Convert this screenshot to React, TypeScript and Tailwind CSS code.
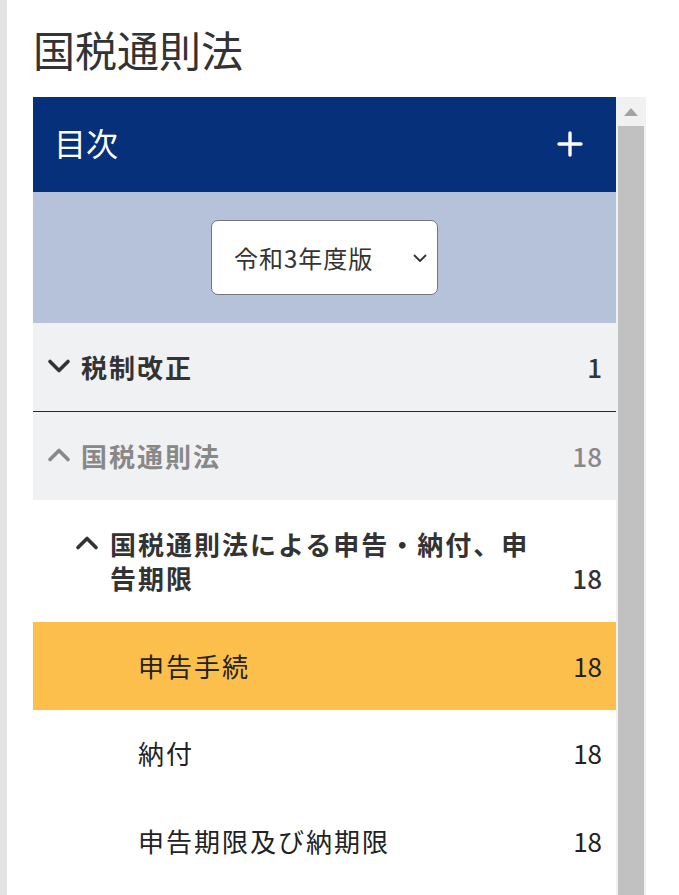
import React from "react";

const font = { fontFamily: '"Noto Sans CJK JP", "Noto Sans", sans-serif' };

function ChevronDown({ className }: { className?: string }) {
  return (
    <svg viewBox="0 0 24 24" className={className} fill="none" stroke="currentColor" strokeWidth={3.6} strokeLinecap="round" strokeLinejoin="round">
      <path d="M3 7.5l9 9 9-9" />
    </svg>
  );
}
function ChevronUp({ className }: { className?: string }) {
  return (
    <svg viewBox="0 0 24 24" className={className} fill="none" stroke="currentColor" strokeWidth={3.6} strokeLinecap="round" strokeLinejoin="round">
      <path d="M3 16.5l9-9 9 9" />
    </svg>
  );
}

export default function App() {
  return (
    <div className="flex h-[895px] overflow-hidden bg-white text-[#333]" style={font}>
      <div className="w-[7px] shrink-0 bg-[#e4e4e4]" />
      <div className="flex flex-col pl-[26px]">
        <h1 className="pt-[21px] pb-[20px] text-[42px] leading-[56px] font-normal text-[#333]">国税通則法</h1>
        <div className="flex w-[613px] flex-1">
          <div className="w-[583px] shrink-0 flex flex-col">
            <div className="flex h-[95px] items-center justify-between bg-[#063079] pb-[6px] pl-[21px] pr-[33px] text-white">
              <span className="text-[32px] leading-none">目次</span>
              <svg viewBox="0 0 26 26" className="mt-[4px] h-[26px] w-[26px]" stroke="white" strokeWidth={3.4} strokeLinecap="round">
                <path d="M13 2v22M2 13h22" />
              </svg>
            </div>
            <div className="flex h-[131px] items-center justify-center bg-[#b5c2da]">
              <div className="flex h-[75px] w-[227px] items-center justify-between rounded-[7px] border border-[#767676] bg-white pl-[22px] pr-[9px]">
                <span className="text-[24px] tracking-[1px] text-[#333]">令和3年度版</span>
                <svg viewBox="0 0 16 16" className="h-[16px] w-[16px]" fill="none" stroke="#333" strokeWidth={1.8} strokeLinecap="round" strokeLinejoin="round">
                  <path d="M2.5 5.5l5.5 5.5 5.5-5.5" />
                </svg>
              </div>
            </div>
            <div className="flex h-[89px] items-center justify-between border-b border-[#0a2d66] bg-[#f0f1f3] pb-[2px] pl-[14px] pr-[14px] text-[26px] font-semibold tracking-[2px] text-[#333]">
              <div className="flex items-center">
                <ChevronDown className="h-[24px] w-[24px] text-[#333]" />
                <span className="ml-[10px]">税制改正</span>
              </div>
              <span className="font-medium tracking-normal">1</span>
            </div>
            <div className="flex h-[88px] items-center justify-between bg-[#f0f1f3] pb-[2px] pl-[14px] pr-[14px] text-[26px] font-semibold tracking-[2px] text-[#888]">
              <div className="flex items-center">
                <ChevronUp className="h-[24px] w-[24px] text-[#888]" />
                <span className="ml-[10px]">国税通則法</span>
              </div>
              <span className="font-medium tracking-normal">18</span>
            </div>
            <div className="flex items-end justify-between py-[27px] pl-[42px] pr-[14px] text-[26px] font-semibold leading-[34px] tracking-[2px] text-[#333]">
              <div className="flex items-start">
                <ChevronUp className="mt-[4px] h-[24px] w-[24px] shrink-0 text-[#333]" />
                <span className="ml-[11px] w-[430px]">国税通則法による申告・納付、申告期限</span>
              </div>
              <span className="font-medium tracking-normal">18</span>
            </div>
            <div className="flex h-[88px] items-center justify-between bg-[#fdbf4b] pb-[2px] pl-[105px] pr-[14px] text-[26px] tracking-[2px] text-[#222]">
              <span>申告手続</span>
              <span className="tracking-normal">18</span>
            </div>
            <div className="flex h-[87px] items-center justify-between pb-[2px] pl-[105px] pr-[14px] text-[26px] tracking-[2px] text-[#222]">
              <span>納付</span>
              <span className="tracking-normal">18</span>
            </div>
            <div className="flex h-[88px] items-center justify-between pb-[2px] pl-[105px] pr-[14px] text-[26px] tracking-[2px] text-[#222]">
              <span>申告期限及び納期限</span>
              <span className="tracking-normal">18</span>
            </div>
          </div>
          <div className="flex w-[30px] shrink-0 flex-col bg-[#f1f1f1] pl-[2px] pr-[2px]">
            <div className="flex h-[29px] items-center justify-center">
              <svg viewBox="0 0 14 8" className="h-[8px] w-[14px]">
                <path d="M7 0L14 8H0z" fill="#a3a3a3" />
              </svg>
            </div>
            <div className="flex-1 bg-[#c1c1c1]" />
          </div>
        </div>
      </div>
    </div>
  );
}
